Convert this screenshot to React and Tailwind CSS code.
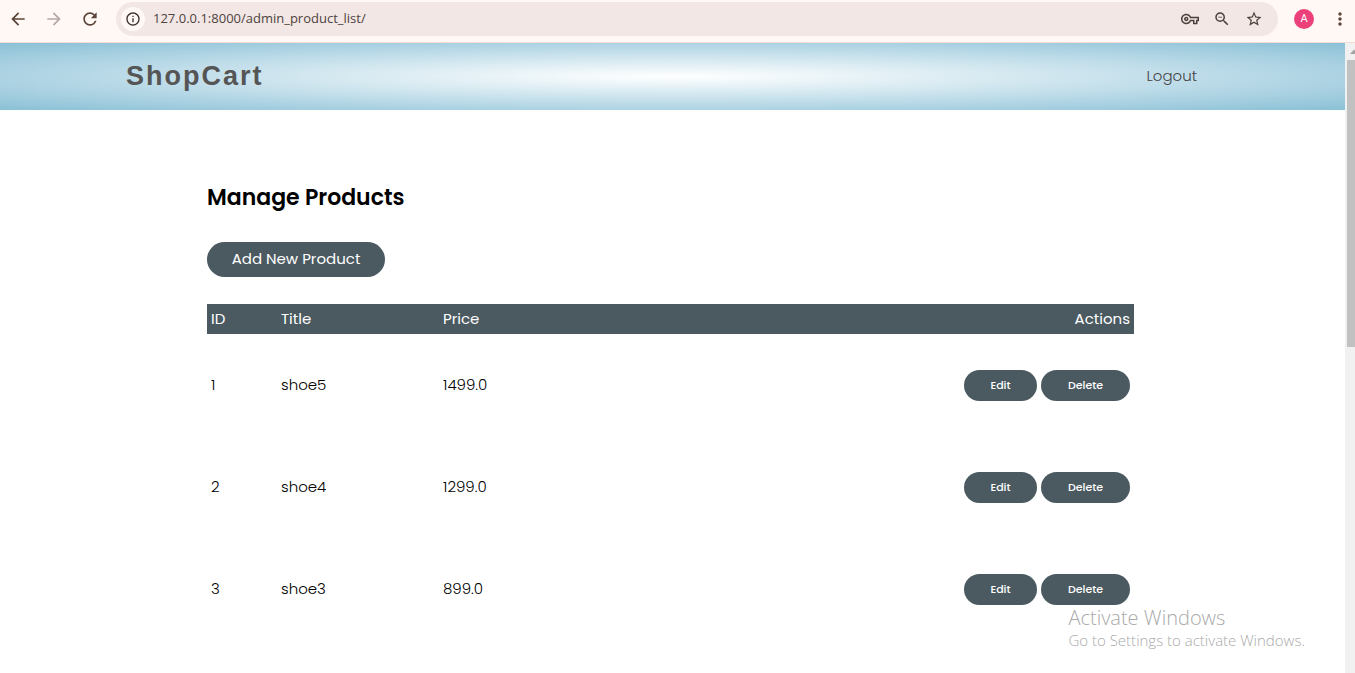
import {
  MdArrowBack,
  MdArrowForward,
  MdInfoOutline,
  MdMoreVert,
  MdOutlineVpnKey,
  MdRefresh,
  MdStarBorder,
  MdZoomOut,
} from "react-icons/md";

const products = [
  { id: 1, title: "shoe5", price: "1499.0" },
  { id: 2, title: "shoe4", price: "1299.0" },
  { id: 3, title: "shoe3", price: "899.0" },
];

function BrowserBar() {
  return (
    <div className="flex h-[43px] shrink-0 items-center border-b border-[#f3dcd5] bg-[#fff8f5] pb-1 text-[#5b4339]">
      <div className="flex items-center gap-4 pl-2">
        <button type="button" aria-label="Back"><MdArrowBack size={20} /></button>
        <button type="button" aria-label="Forward" className="text-[#b5a8a4]"><MdArrowForward size={20} /></button>
        <button type="button" aria-label="Reload"><MdRefresh size={20} /></button>
      </div>
      <div className="ml-4 flex h-[34px] grow items-center rounded-full bg-[#f2e7e4] pr-[15px] pl-[5px]">
        <button type="button" aria-label="Site information" className="flex size-6 items-center justify-center rounded-full bg-[#fff8f5] text-[#3b302c]">
          <MdInfoOutline size={16} />
        </button>
        <input
          type="text"
          aria-label="Address"
          defaultValue="127.0.0.1:8000/admin_product_list/"
          className="ml-2 min-w-0 grow bg-transparent font-['Open_Sans',sans-serif] text-[13px] text-[#4d4341] outline-none"
        />
        <div className="flex items-center gap-[14px] text-[#4d403c]">
          <button type="button" aria-label="Passwords"><MdOutlineVpnKey size={18} /></button>
          <button type="button" aria-label="Zoom"><MdZoomOut size={18} /></button>
          <button type="button" aria-label="Bookmark"><MdStarBorder size={18} /></button>
        </div>
      </div>
      <button type="button" aria-label="Profile" className="ml-4 size-5 rounded-full bg-[#ec407a] font-['Roboto',sans-serif] text-[11px] text-white">
        A
      </button>
      <button type="button" aria-label="Menu" className="mr-[5px] ml-4"><MdMoreVert size={20} /></button>
    </div>
  );
}

function Header() {
  return (
    <header className="bg-[radial-gradient(#ffffff_0%,#add3e3_70%,#8ac0d6_100%)]">
      <div className="mx-auto flex h-[67px] w-full max-w-[1093px] items-center justify-between pr-[22px]">
        <a href="#home" className="font-['Liberation_Sans',sans-serif] text-[27px] font-bold tracking-[2px] text-[#555555]">
          ShopCart
        </a>
        <a href="#logout" className="text-[15px] font-light text-[#444444]">Logout</a>
      </div>
    </header>
  );
}

function ProductTable() {
  return (
    <table className="mt-[27px] w-full table-fixed border-collapse text-[15px]">
      <thead>
        <tr className="h-[30px] bg-[#4b5a61] text-left text-white">
          <th scope="col" className="w-[70px] px-1 font-normal">ID</th>
          <th scope="col" className="w-[162px] px-1 font-normal">Title</th>
          <th scope="col" className="px-1 font-normal">Price</th>
          <th scope="col" className="px-1 text-right font-normal">Actions</th>
        </tr>
      </thead>
      <tbody>
        {products.map((product) => (
          <tr key={product.id} className="h-[102px] font-light">
            <td className="px-1">{product.id}</td>
            <td className="px-1">{product.title}</td>
            <td className="px-1">{product.price}</td>
            <td className="px-1">
              <div className="flex justify-end gap-1 text-[11px] font-medium text-white">
                <button type="button" className="h-[31px] w-[73px] rounded-full bg-[#4b5a61]">Edit</button>
                <button type="button" className="h-[31px] w-[89px] rounded-full bg-[#4b5a61]">Delete</button>
              </div>
            </td>
          </tr>
        ))}
      </tbody>
    </table>
  );
}

function Scrollbar() {
  return (
    <div className="flex w-[10px] shrink-0 flex-col items-end overflow-hidden bg-[#f1f1f1]">
      <svg viewBox="0 0 8 17" className="h-[17px] w-2 shrink-0" aria-hidden="true">
        <path d="M3 11 L7 6.5 L11 11 Z" fill="#a3a3a3" />
      </svg>
      <div className="h-[287px] w-2 bg-[#c1c1c1]" />
    </div>
  );
}

export default function App() {
  return (
    <div className="relative flex h-screen flex-col overflow-hidden bg-white font-['Poppins','Inter',sans-serif] text-black">
      <BrowserBar />
      <div className="flex min-h-0 grow">
        <div className="min-w-0 grow overflow-hidden">
          <Header />
          <main className="mx-auto w-full max-w-[1093px] pt-[72px] pr-[85px] pl-[81px]">
            <h1 className="text-[22px] leading-8 font-semibold">Manage Products</h1>
            <button type="button" className="mt-7 block h-[35px] w-[178px] rounded-full bg-[#4b5a61] text-[15px] font-normal text-white">
              Add New Product
            </button>
            <ProductTable />
          </main>
        </div>
        <Scrollbar />
      </div>
      <div className="pointer-events-none absolute right-[50px] bottom-[23px] font-['Open_Sans',sans-serif] font-light text-[#aaaaaa]">
        <p className="text-[20px] leading-6">Activate Windows</p>
        <p className="text-[15px] leading-5">Go to Settings to activate Windows.</p>
      </div>
    </div>
  );
}
